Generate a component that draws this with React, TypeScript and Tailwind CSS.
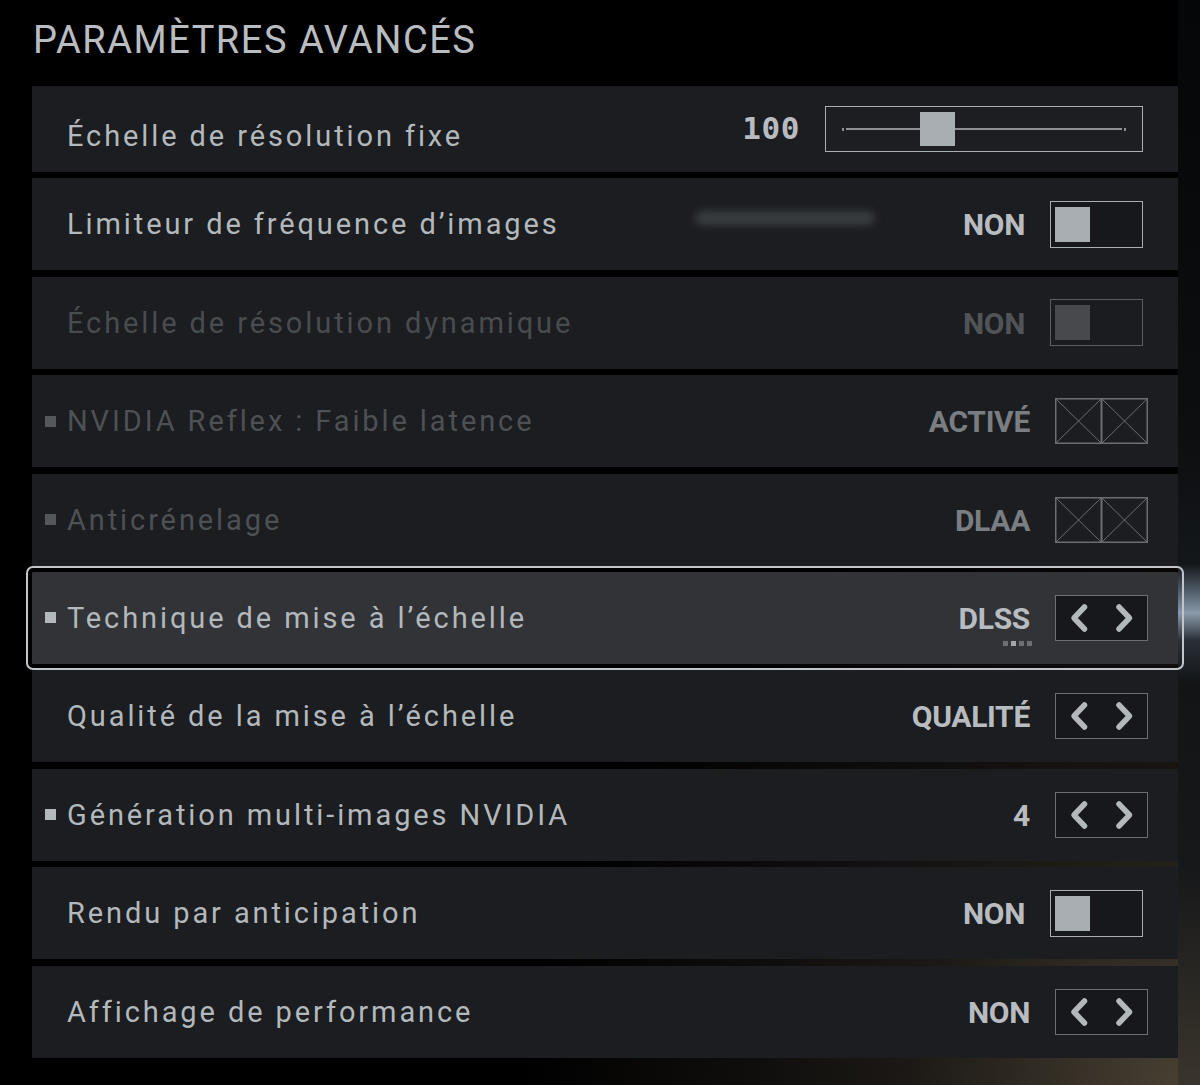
import React from "react";

type Tone = "normal" | "dim" | "dimmer";

function Chevrons() {
  return (
    <div className="w-[93px] h-[46px] border border-[#6b6f73] bg-[#16181b] shrink-0">
      <svg width="91" height="44" viewBox="0 0 91 44" className="block">
        <path d="M28.5 11 L18 22 L28.5 33" fill="none" stroke="#b3b8bc" strokeWidth="5.5" strokeLinecap="round" strokeLinejoin="round" />
        <path d="M63 11 L73.5 22 L63 33" fill="none" stroke="#b3b8bc" strokeWidth="5.5" strokeLinecap="round" strokeLinejoin="round" />
      </svg>
    </div>
  );
}

function CrossBoxes() {
  return (
    <div className="w-[93px] h-[46px] shrink-0">
      <svg width="93" height="46" viewBox="0 0 93 46" className="block">
        <g fill="none" stroke="#6a6e72" strokeWidth="1.5">
          <rect x="0.75" y="0.75" width="45.5" height="44.5" />
          <rect x="46.75" y="0.75" width="45.5" height="44.5" />
          <line x1="0.75" y1="0.75" x2="46.25" y2="45.25" strokeWidth="1" />
          <line x1="46.25" y1="0.75" x2="0.75" y2="45.25" strokeWidth="1" />
          <line x1="46.75" y1="0.75" x2="92.25" y2="45.25" strokeWidth="1" />
          <line x1="92.25" y1="0.75" x2="46.75" y2="45.25" strokeWidth="1" />
        </g>
      </svg>
    </div>
  );
}

function Toggle({ dim }: { dim?: boolean }) {
  return (
    <div
      className={
        "w-[93px] h-[47px] shrink-0 flex items-center pl-[4px] border-[1.5px] " +
        (dim ? "border-[#5a5d61] bg-[#1a1c1f]" : "border-[#a9aeb3] bg-[#16181b]")
      }
    >
      <div className={"w-[35px] h-[35px] " + (dim ? "bg-[#48494d]" : "bg-[#a9aeb3]")} />
    </div>
  );
}

function Slider() {
  return (
    <div className="w-[318px] h-[46px] shrink-0 border-[1.5px] border-[#a9aeb3] bg-[#1c1e21] flex items-center px-[16px]">
      <div className="relative flex-1 h-[34px] flex items-center">
        <div className="w-[2px] h-[3px] bg-[#8d9196]" />
        <div className="flex-1 h-[1.5px] bg-[#8d9196] mx-[2px]" />
        <div className="w-[2px] h-[3px] bg-[#8d9196]" />
        <div className="absolute left-[78px] top-0 w-[35px] h-[34px] bg-[#a9aeb3]" />
      </div>
    </div>
  );
}

function Row({
  label,
  value,
  bullet,
  tone = "normal",
  control,
  selected,
  valueTone,
  pr,
  extra,
  mono,
  dots,
  h = "h-[92px]",
  labelPad = "pt-[1px]",
}: {
  label: string;
  value?: string;
  bullet?: boolean;
  tone?: Tone;
  control: React.ReactNode;
  selected?: boolean;
  valueTone?: string;
  pr: string;
  extra?: React.ReactNode;
  mono?: boolean;
  dots?: boolean;
  h?: string;
  labelPad?: string;
}) {
  const labelColor =
    tone === "normal" ? "text-[#b3b8bc]" : tone === "dim" ? "text-[#4e5154]" : "text-[#494c4f]";
  const bulletColor = tone === "normal" ? "bg-[#b3b8bc]" : "bg-[#55585b]";
  return (
    <div
      className={
        "relative z-10 flex items-center pl-[13px] shrink-0 " +
        h +
        " " +
        pr +
        (selected
          ? " bg-[#313337] outline-2 outline-[#c2c6ca] outline-offset-[4px] rounded-[1px]"
          : " bg-[#1b1d20]")
      }
    >
      {extra}
      <div className={"w-[11px] h-[11px] mr-[11px] shrink-0 " + (bullet ? bulletColor : "")} />
      <div className={"flex-1 text-[29px] tracking-[0.1em] leading-none " + labelColor + " " + labelPad}>
        {label}
      </div>
      {value !== undefined && (
        <div className={"relative mr-[25px] " + (mono ? "" : "pt-[4px]")}>
          <span
            className={
              (mono
                ? "font-['DejaVu_Sans_Mono',monospace] text-[31px] font-bold tracking-[0.02em]"
                : "text-[30px] font-bold tracking-[-0.01em]") +
              " leading-none " +
              (valueTone ?? "text-[#b8bcc0]")
            }
          >
            {value}
          </span>
          {dots && (
            <div className="absolute right-[-2px] top-[calc(100%+5px)] flex gap-[3px]">
              <div className="w-[5px] h-[5px] bg-[#6c7074]" />
              <div className="w-[5px] h-[5px] bg-[#a2a6aa]" />
              <div className="w-[5px] h-[5px] bg-[#6c7074]" />
              <div className="w-[5px] h-[5px] bg-[#6c7074]" />
            </div>
          )}
        </div>
      )}
      {control}
    </div>
  );
}

export default function App() {
  return (
    <div className="w-[1200px] h-[1085px] overflow-hidden bg-black bg-[radial-gradient(ellipse_at_100%_100%,#4a4234_0%,#1a1714_18%,#000_40%)] font-['Roboto',sans-serif] flex flex-col">
      <div className="h-[86px] pl-[33px] pt-[21px] shrink-0">
        <h1 className="text-[38px] leading-none text-[#b9bdc1] tracking-[0.04em] font-normal">
          PARAMÈTRES AVANCÉS
        </h1>
      </div>
      <div className="flex pl-[32px] flex-1">
        <div className="w-[1146px] flex flex-col gap-[6.4px]">
          <Row
            h="h-[86px]"
            labelPad="pt-[14px]"
            label="Échelle de résolution fixe"
            value="100"
            mono
            pr="pr-[35px]"
            control={<Slider />}
          />
          <Row
            label="Limiteur de fréquence d’images"
            value="NON"
            pr="pr-[35px]"
            control={<Toggle />}
            extra={
              <div className="absolute left-[663px] top-[33px] w-[180px] h-[14px] rounded-full bg-[#3a3e42] blur-[4px]" />
            }
          />
          <Row
            label="Échelle de résolution dynamique"
            value="NON"
            tone="dimmer"
            valueTone="text-[#515457]"
            pr="pr-[35px]"
            control={<Toggle dim />}
          />
          <Row
            label="NVIDIA Reflex : Faible latence"
            value="ACTIVÉ"
            bullet
            tone="dim"
            valueTone="text-[#7a7e82]"
            pr="pr-[30px]"
            control={<CrossBoxes />}
          />
          <Row
            label="Anticrénelage"
            value="DLAA"
            bullet
            tone="dim"
            valueTone="text-[#7a7e82]"
            pr="pr-[30px]"
            control={<CrossBoxes />}
          />
          <Row
            label="Technique de mise à l’échelle"
            value="DLSS"
            bullet
            selected
            dots
            pr="pr-[30px]"
            control={<Chevrons />}
          />
          <Row
            label="Qualité de la mise à l’échelle"
            value="QUALITÉ"
            pr="pr-[30px]"
            control={<Chevrons />}
          />
          <Row
            label="Génération multi-images NVIDIA"
            value="4"
            bullet
            pr="pr-[30px]"
            control={<Chevrons />}
          />
          <Row
            label="Rendu par anticipation"
            value="NON"
            pr="pr-[35px]"
            control={<Toggle />}
          />
          <Row
            label="Affichage de performance"
            value="NON"
            pr="pr-[30px]"
            control={<Chevrons />}
          />
        </div>
        <div className="flex-1 -mt-[86px] bg-[linear-gradient(to_bottom,#050607_0%,#0c0e10_40%,#14171a_52%,#5d6b7a_55%,#8a9aaa_56.5%,#2a3038_59%,#121416_63%,#17181a_80%,#3a352c_100%)]" />
      </div>
    </div>
  );
}
